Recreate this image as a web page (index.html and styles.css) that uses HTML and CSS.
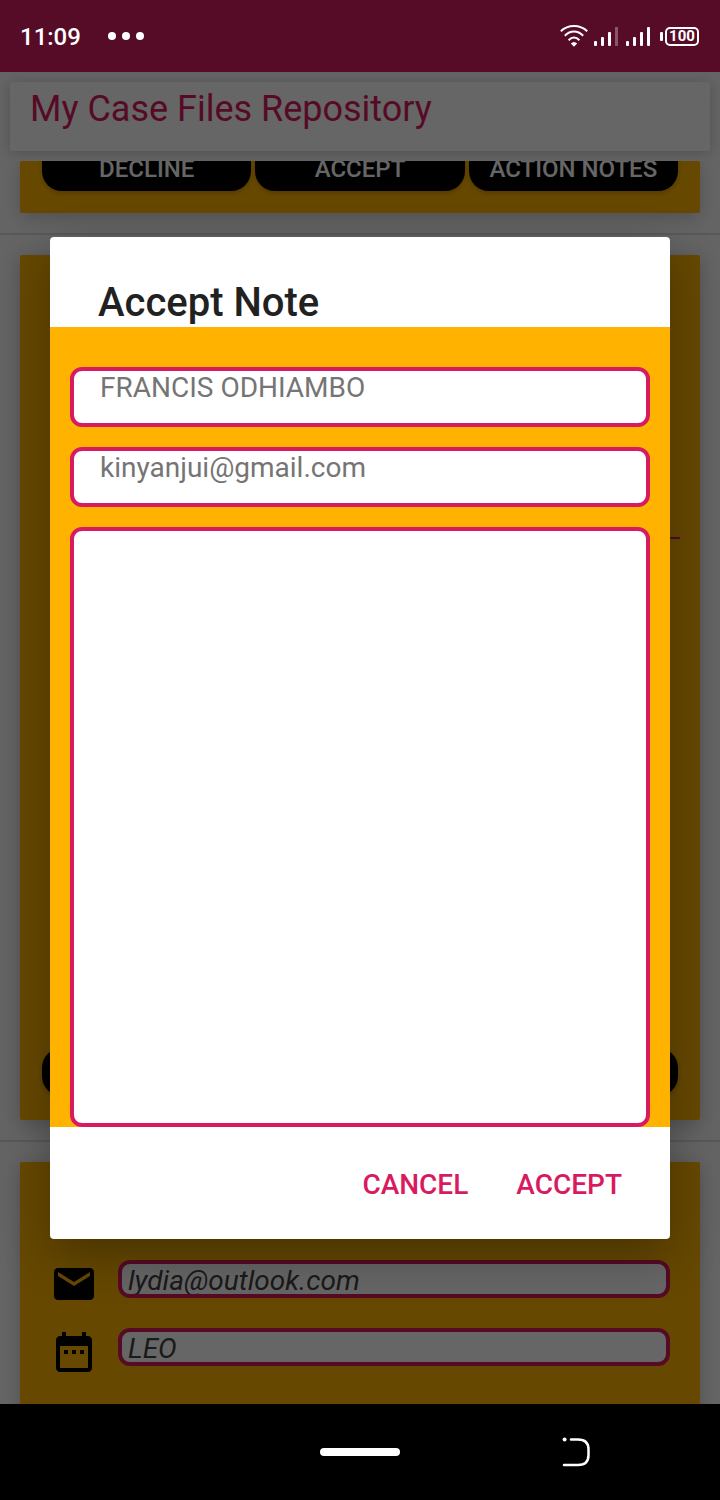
FILE: index.html
```html
<!DOCTYPE html>
<html lang="en">
<head>
<meta charset="utf-8">
<meta name="viewport" content="width=device-width, initial-scale=1">
<title>My Case Files Repository</title>
<link rel="stylesheet" href="styles.css">
</head>
<body>
<div class="screen">
  <header class="status-bar">
    <span class="clock">11:09</span>
    <svg class="dots" width="36" height="8" viewBox="0 0 36 8" fill="#fff" aria-hidden="true"><circle cx="4" cy="4" r="4"/><circle cx="18" cy="4" r="4"/><circle cx="32" cy="4" r="4"/></svg>
    <div class="status-icons">
      <svg width="28" height="24" viewBox="0 0 28 24" fill="none" stroke="#fff" stroke-width="2" aria-label="Wi-Fi" role="img">
        <path d="M.8 7.300C8 .3 20 .3 27.200 7.300M4.800 11.700C10.500 6.200 17.500 6.200 23.200 11.700M8.600 16.200C12 12.700 16 12.700 19.400 16.200"/>
        <path d="M10.800 19.500Q14 16.500 17.200 19.500L14 22.800Z" fill="#fff" stroke="none"/>
      </svg>
      <svg width="24" height="20" viewBox="0 0 24 20" fill="#fff" aria-label="Signal" role="img"><rect y="15" width="3" height="5" rx="1"/><rect x="7" y="11" width="3" height="9" rx="1"/><rect x="14" y="6" width="3" height="14" rx="1"/><rect x="21" y="1" width="3" height="19" opacity=".3"/></svg>
      <svg width="24" height="20" viewBox="0 0 24 20" fill="#fff" aria-label="Signal" role="img"><rect y="15" width="3" height="5" rx="1"/><rect x="7" y="11" width="3" height="9" rx="1"/><rect x="14" y="6" width="3" height="14" rx="1"/><rect x="21" y="1" width="3" height="19" rx="1"/></svg>
      <span class="battery"><span class="battery-level">100</span></span>
    </div>
  </header>

  <main class="app">
    <div class="app-header"><h1 class="app-title">My Case Files Repository</h1></div>
    <div class="list">
      <section class="card card-scrolled">
        <div class="card-actions">
          <button class="pill" type="button">DECLINE</button>
          <button class="pill" type="button">ACCEPT</button>
          <button class="pill" type="button">ACTION NOTES</button>
        </div>
      </section>
      <hr class="divider">
      <section class="card card-full">
        <hr class="card-rule">
        <div class="card-actions">
          <button class="pill" type="button" aria-label="Decline"></button>
          <button class="pill" type="button" aria-label="Accept"></button>
          <button class="pill" type="button" aria-label="Action notes"></button>
        </div>
      </section>
      <hr class="divider">
      <section class="card card-last">
        <label class="row">
          <svg width="48" height="48" viewBox="0 0 24 24" aria-label="Email" role="img"><path d="M20 4H4c-1.100 0-2 .9-2 2v12c0 1.100.9 2 2 2h16c1.100 0 2-.9 2-2V6c0-1.100-.9-2-2-2zm0 4l-8 5-8-5V6l8 5 8-5z"/></svg>
          <input class="row-field" type="email" value="lydia@outlook.com">
        </label>
        <label class="row">
          <svg width="48" height="48" viewBox="0 0 24 24" aria-label="Date" role="img"><path d="M9 11H7v2h2zm4 0h-2v2h2zm4 0h-2v2h2zM19 4h-1V2h-2v2H8V2H6v2H5c-1.100 0-2 .9-2 2v14c0 1.100.9 2 2 2h14c1.100 0 2-.9 2-2V6c0-1.100-.9-2-2-2zm0 16H5V9h14z"/></svg>
          <input class="row-field" type="text" value="LEO">
        </label>
      </section>
    </div>

    <div class="scrim">
      <form class="dialog" role="dialog" aria-labelledby="dialog-title">
        <h2 class="dialog-title" id="dialog-title">Accept Note</h2>
        <div class="dialog-body">
          <input class="field" type="text" placeholder="FRANCIS ODHIAMBO" aria-label="Name">
          <input class="field" type="email" placeholder="kinyanjui@gmail.com" aria-label="Email">
          <textarea class="field note" aria-label="Note"></textarea>
        </div>
        <div class="dialog-actions">
          <button class="text-button" type="button">CANCEL</button>
          <button class="text-button" type="button">ACCEPT</button>
        </div>
      </form>
    </div>
  </main>

  <nav class="nav-bar">
    <span></span>
    <button class="nav-button" type="button" aria-label="Home"><span class="home-pill"></span></button>
    <button class="nav-button" type="button" aria-label="Back">
      <svg width="28" height="30" viewBox="0 0 28 30" fill="none" stroke="#fff" stroke-width="2.500" stroke-linecap="round"><path d="M9 2.500H16Q26.500 2.500 26.500 12.500V18Q26.500 28 16 28H2"/><circle cx="2.600" cy="2.600" r="2" fill="#fff" stroke="none"/></svg>
    </button>
  </nav>
</div>
</body>
</html>
```

FILE: styles.css
```css
* {
  box-sizing: border-box;
}

body {
  margin: 0;
  font-family: Roboto, "Liberation Sans", sans-serif;
  background: #000;
}

button,
input,
textarea {
  font-family: inherit;
  margin: 0;
}

.screen {
  display: flex;
  flex-direction: column;
  height: 100vh;
}

/* Status bar */
.status-bar {
  display: flex;
  align-items: center;
  flex: none;
  gap: 27px;
  height: 72px;
  padding: 0 21px 0 20px;
  background: #560c26;
  color: #fff;
}

.clock {
  padding-top: 2px;
  font-size: 24px;
  font-weight: 500;
}

.status-icons {
  display: flex;
  align-items: center;
  gap: 8px;
  margin-left: auto;
}

.status-icons svg:first-child {
  margin-right: -2px;
}

.battery {
  display: flex;
  align-items: center;
  gap: 2px;
  margin-left: 2px;
}

.battery::before {
  content: "";
  width: 3px;
  height: 9px;
  border-radius: 1px;
  background: #fff;
}

.battery-level {
  display: flex;
  justify-content: center;
  width: 34px;
  border: 2px solid #fff;
  border-radius: 5px;
  font-size: 15px;
  font-weight: 700;
  line-height: 15px;
}

/* Page behind the dialog */
.app {
  position: relative;
  display: flex;
  flex-direction: column;
  flex: 1;
  min-height: 0;
  overflow: hidden;
  background: #fafafa;
}

.app-header {
  flex: none;
  padding: 10px;
}

.app-title {
  margin: 0;
  padding: 6px 20px 21px;
  border-radius: 2px;
  background: #fff;
  box-shadow: 0 2px 14px rgba(0, 0, 0, 0.2);
  color: #d81b60;
  font-size: 36px;
  font-weight: 400;
  line-height: 42px;
}

.list {
  display: flex;
  flex-direction: column;
  flex: 1;
  min-height: 0;
  overflow: hidden;
}

.card {
  display: flex;
  flex-direction: column;
  flex: none;
  margin: 0 20px;
  border-radius: 2px;
  background: #ffb300;
  box-shadow: 0 4px 18px rgba(0, 0, 0, 0.2);
}

.card-scrolled {
  justify-content: flex-end;
  height: 52px;
  padding: 0 22px 22px;
}

.card-full {
  justify-content: space-between;
  height: 865px;
  padding: 282px 22px 24px;
}

.card-last {
  gap: 20px;
  padding: 98px 30px 60px;
}

.divider {
  flex: none;
  width: 100%;
  height: 2px;
  margin: 20px 0;
  border: 0;
  background: #dcdcdc;
}

.card-rule {
  width: 50%;
  height: 2px;
  margin: 0 -2px 0 auto;
  border: 0;
  background: #d81b60;
}

.card-actions {
  display: grid;
  grid-template-columns: repeat(3, 1fr);
  gap: 4px;
}

.pill {
  height: 48px;
  padding: 4px 0 0;
  border: 0;
  border-radius: 20px;
  background: #000;
  box-shadow: 0 2px 4px rgba(0, 0, 0, 0.2);
  color: #fff;
  font-size: 24px;
  font-weight: 500;
  white-space: nowrap;
}

.row {
  display: flex;
  align-items: flex-start;
  gap: 20px;
}

.row svg {
  flex: none;
}

.row-field {
  flex: 1;
  min-width: 0;
  height: 38px;
  padding: 2px 6px 0;
  border: 4px solid #d81b60;
  border-radius: 12px;
  background: #fff;
  color: #424242;
  font-size: 28px;
  font-style: italic;
}

/* Dialog */
.scrim {
  position: absolute;
  inset: 0;
  display: flex;
  align-items: center;
  padding: 0 50px;
  background: rgba(0, 0, 0, 0.6);
}

.dialog {
  flex: 1;
  min-width: 0;
  overflow: hidden;
  border-radius: 4px;
  background: #fff;
  box-shadow: 0 16px 48px rgba(0, 0, 0, 0.3);
}

.dialog-title {
  margin: 0;
  padding: 42px 48px 0;
  color: #212121;
  font-size: 40px;
  font-weight: 500;
  line-height: 48px;
}

.dialog-body {
  display: flex;
  flex-direction: column;
  gap: 20px;
  padding: 40px 20px 0;
  background: #ffb300;
}

.field {
  width: 100%;
  height: 60px;
  padding: 0 26px 20px;
  border: 4px solid #d81b60;
  border-radius: 12px;
  background: #fff;
  color: #212121;
  font-size: 28px;
}

.field::placeholder {
  color: #757575;
}

.note {
  height: 600px;
  resize: none;
}

.dialog-actions {
  display: flex;
  justify-content: flex-end;
  gap: 16px;
  padding: 8px 32px;
}

.text-button {
  height: 96px;
  padding: 2px 16px 0;
  border: 0;
  background: none;
  color: #d81b60;
  font-size: 28px;
  font-weight: 500;
}

/* System navigation */
.nav-bar {
  display: grid;
  grid-template-columns: repeat(3, 1fr);
  flex: none;
  justify-items: center;
  align-items: center;
  height: 96px;
  padding: 0 5%;
  background: #000;
}

.nav-button {
  display: flex;
  padding: 0;
  border: 0;
  background: none;
}

.home-pill {
  width: 80px;
  height: 8px;
  border-radius: 4px;
  background: #fff;
}
```
